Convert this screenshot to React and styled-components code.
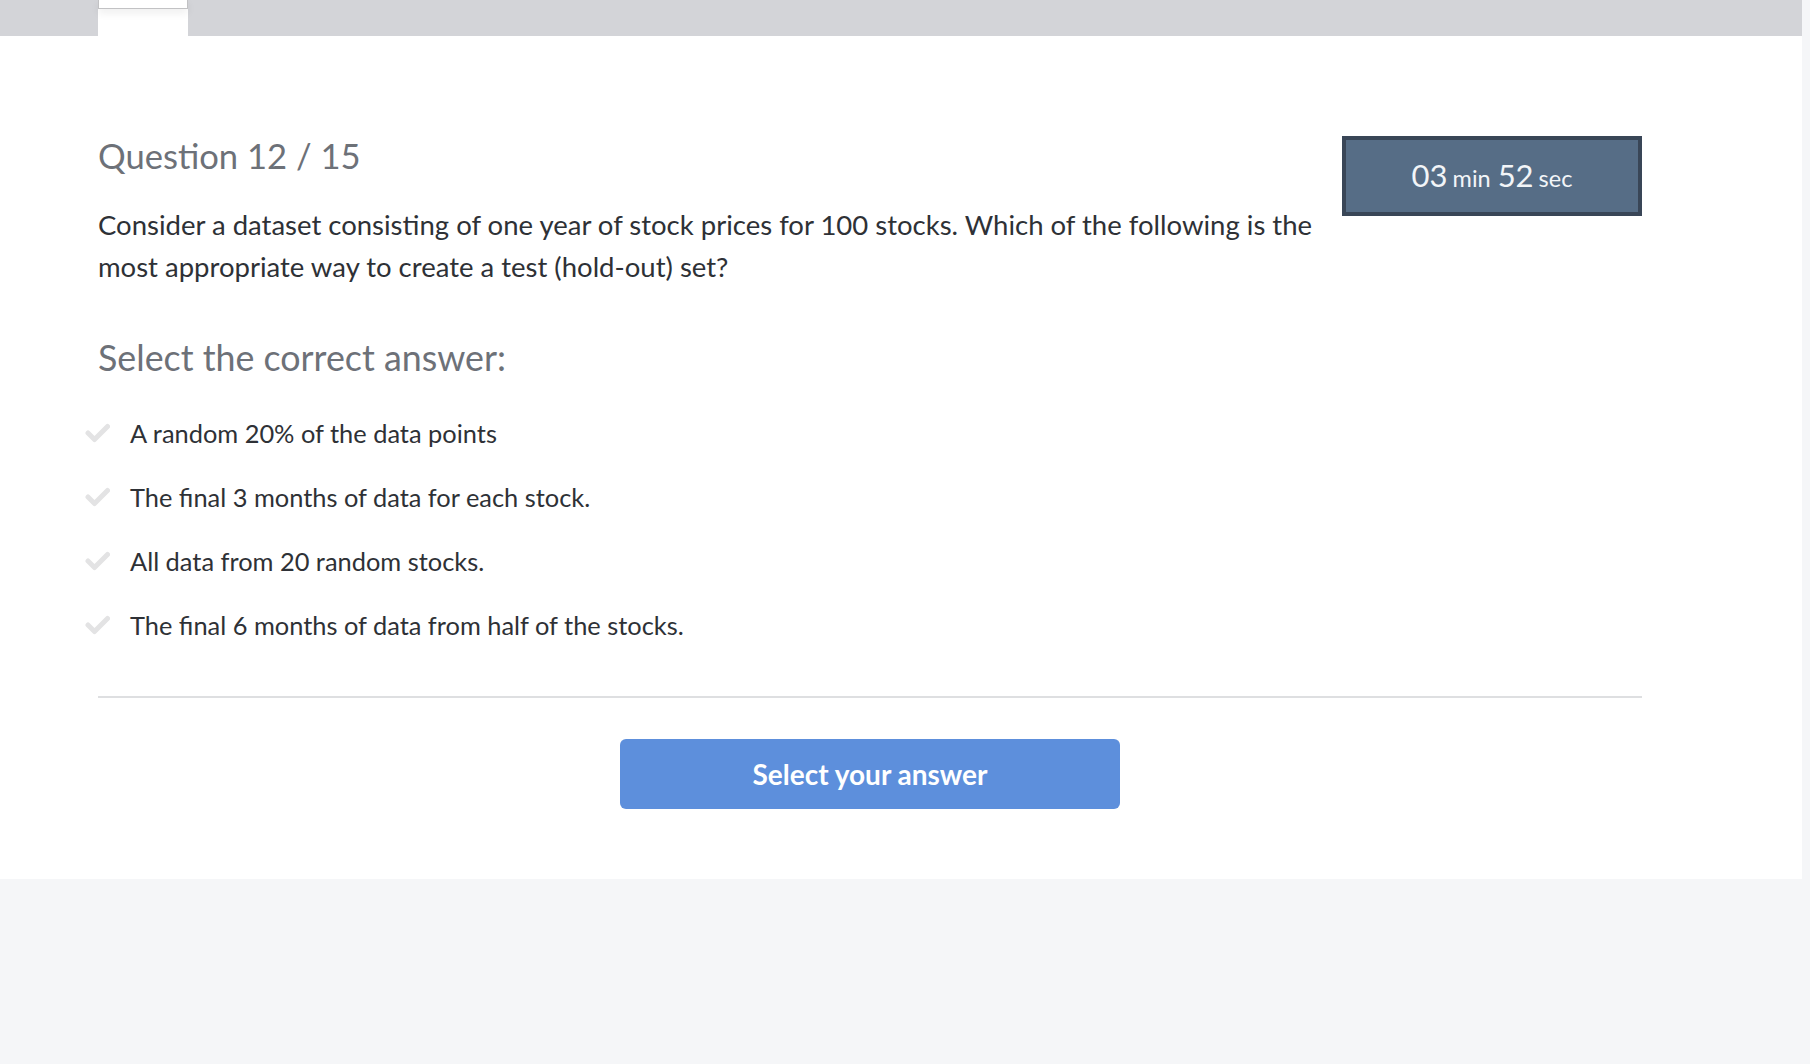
import React from "react";
import styled, { createGlobalStyle } from "styled-components";

const Global = createGlobalStyle`
  html, body { margin: 0; padding: 0; }
  body {
    background: #f5f6f8;
    font-family: Lato, "Open Sans", "Liberation Sans", sans-serif;
    -webkit-font-smoothing: antialiased;
  }
`;

const Card = styled.div`
  width: 1802px;
  background: #ffffff;
`;

const TopBar = styled.div`
  height: 36px;
  background: #d3d4d8;
  display: flex;
  padding-left: 98px;
`;

const Tab = styled.div`
  width: 90px;
  height: 36px;
  background: #ffffff;
`;

const TabLip = styled.div`
  height: 9px;
  box-sizing: border-box;
  border: 1px solid #c2c2c4;
  border-top: none;
  background: #fff;
  box-shadow: 0 4px 8px rgba(0, 0, 0, 0.07);
`;

const Content = styled.div`
  padding: 100px 160px 70px 98px;
`;

const HeaderRow = styled.div`
  display: flex;
  align-items: flex-start;
  gap: 20px;
`;

const QuestionCol = styled.div`
  flex: 1;
  min-width: 0;
`;

const Title = styled.h1`
  margin: 0;
  font-size: 34.6px;
  line-height: 40px;
  font-weight: 400;
  color: #6d7178;
`;

const QuestionText = styled.p`
  margin: 28px 0 0;
  font-size: 27.5px;
  line-height: 42px;
  color: #2e3136;
`;

const Timer = styled.div`
  width: 300px;
  height: 80px;
  box-sizing: border-box;
  border: 4px solid #394657;
  background: #566d86;
  color: #f2f5f8;
  display: flex;
  align-items: baseline;
  justify-content: center;
  padding-top: 20px;
  flex-shrink: 0;
`;

const TimerNum = styled.span`
  font-size: 31px;
  line-height: 1;
`;

const TimerUnit = styled.span`
  font-size: 23.5px;
  line-height: 1;
  margin: 0 7px 0 5px;
  &:last-child { margin-right: 0; }
`;

const SubTitle = styled.h2`
  margin: 49px 0 0;
  font-size: 35.8px;
  line-height: 42px;
  font-weight: 400;
  color: #6d7178;
`;

const Options = styled.ul`
  list-style: none;
  margin: 22px 0 0;
  padding: 0;
`;

const Option = styled.li`
  display: flex;
  align-items: center;
  height: 64px;
  margin-left: -13px;
  gap: 20px;
  font-size: 25.4px;
  color: #2e3136;
  cursor: pointer;
`;

const CheckIcon = styled.svg`
  width: 25px;
  height: 20px;
  flex-shrink: 0;
`;

const Divider = styled.hr`
  margin: 39px 0 0;
  border: none;
  height: 2px;
  background: #dedfe1;
`;

const Footer = styled.div`
  display: flex;
  justify-content: center;
  padding-top: 41px;
`;

const PrimaryButton = styled.button`
  width: 500px;
  height: 70px;
  border: none;
  border-radius: 6px;
  background: #5d8fdc;
  color: #ffffff;
  font-family: inherit;
  font-size: 28px;
  font-weight: 700;
  cursor: pointer;
`;

const Check = () => (
  <CheckIcon viewBox="0 0 25 20">
    <polyline
      points="3,10 9.5,16.5 22.5,3.5"
      fill="none"
      stroke="#e3e3e4"
      strokeWidth="5"
      strokeLinecap="round"
      strokeLinejoin="round"
    />
  </CheckIcon>
);

const answers = [
  "A random 20% of the data points",
  "The final 3 months of data for each stock.",
  "All data from 20 random stocks.",
  "The final 6 months of data from half of the stocks.",
];

export default function App() {
  return (
    <>
      <Global />
      <Card>
        <TopBar>
          <Tab>
            <TabLip />
          </Tab>
        </TopBar>
        <Content>
          <HeaderRow>
            <QuestionCol>
              <Title>Question 12 / 15</Title>
              <QuestionText>
                Consider a dataset consisting of one year of stock prices for 100 stocks. Which of the
                following is the most appropriate way to create a test (hold-out) set?
              </QuestionText>
            </QuestionCol>
            <Timer>
              <TimerNum>03</TimerNum>
              <TimerUnit>min</TimerUnit>
              <TimerNum>52</TimerNum>
              <TimerUnit>sec</TimerUnit>
            </Timer>
          </HeaderRow>
          <SubTitle>Select the correct answer:</SubTitle>
          <Options>
            {answers.map((a) => (
              <Option key={a}>
                <Check />
                <span>{a}</span>
              </Option>
            ))}
          </Options>
          <Divider />
          <Footer>
            <PrimaryButton>Select your answer</PrimaryButton>
          </Footer>
        </Content>
      </Card>
    </>
  );
}
